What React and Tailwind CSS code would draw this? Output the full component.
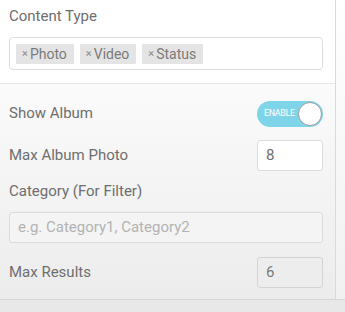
import React from "react";

function Tag({ label }) {
  return (
    <span className="flex items-center h-[20px] pl-[6px] pr-[7px] bg-[#e4e4e4] text-[#7a7a7a] text-[14px] leading-none rounded-[1px]">
      <span className="text-[11px] mr-[2px] text-[#8a8a8a]">×</span>
      {label}
    </span>
  );
}

export default function App() {
  return (
    <div
      className="w-[345px] h-[312px] bg-[#e8e8e8] overflow-hidden"
      style={{ fontFamily: "Roboto, 'Liberation Sans', sans-serif" }}
    >
      <div className="flex border-b border-[#d6d6d6] bg-gradient-to-b from-white to-[#f1f1f1]">
        <div className="w-[336px] border-r border-[#dadada]">
          <div className="bg-white px-[9px] pt-[6px] pb-[13px] border-b border-[#e6e6e6]">
            <div className="text-[15px] text-[#6e6e6e] h-[20px] leading-[20px]">Content Type</div>
            <div className="mt-[11px] w-[314px] h-[33px] border border-[#dcdcdc] rounded-[4px] flex items-center gap-[6px] px-[6px]">
              <Tag label="Photo" />
              <Tag label="Video" />
              <Tag label="Status" />
            </div>
          </div>
          <div className="bg-gradient-to-b from-[#fbfbfb] to-[#ececec] px-[9px] pt-[16px] pb-[11px] flex flex-col">
            <div className="flex items-center justify-between h-[27px] w-[314px]">
              <span className="text-[15px] text-[#6e6e6e]">Show Album</span>
              <div className="w-[66px] h-[26px] rounded-full bg-[#7ed4e9] flex items-center justify-between pl-[7px] pr-[1px]">
                <span className="text-[9px] text-white tracking-[-0.4px] leading-none">ENABLE</span>
                <span className="w-[24px] h-[24px] rounded-full bg-white border border-[#9a9a9a]" />
              </div>
            </div>
            <div className="flex items-center justify-between mt-[13px] w-[314px]">
              <span className="text-[15px] text-[#6e6e6e]">Max Album Photo</span>
              <div className="w-[66px] h-[31px] bg-white border border-[#dcdcdc] rounded-[3px] flex items-center px-[8px] text-[15px] text-[#6e6e6e]">8</div>
            </div>
            <div className="text-[15px] text-[#6e6e6e] mt-[9px] h-[22px] leading-[22px]">Category (For Filter)</div>
            <div className="mt-[10px] w-[314px] h-[31px] bg-[#f4f4f4] border border-[#dcdcdc] rounded-[3px] flex items-center px-[8px] text-[15px] text-[#b3b3b3]">
              e.g. Category1, Category2
            </div>
            <div className="flex items-center justify-between mt-[14px] w-[314px]">
              <span className="text-[15px] text-[#6e6e6e]">Max Results</span>
              <div className="w-[66px] h-[31px] bg-[#ededed] border border-[#d4d4d4] rounded-[3px] flex items-center px-[8px] text-[15px] text-[#7a7a7a]">6</div>
            </div>
          </div>
        </div>
        <div className="flex-1" />
      </div>
    </div>
  );
}
